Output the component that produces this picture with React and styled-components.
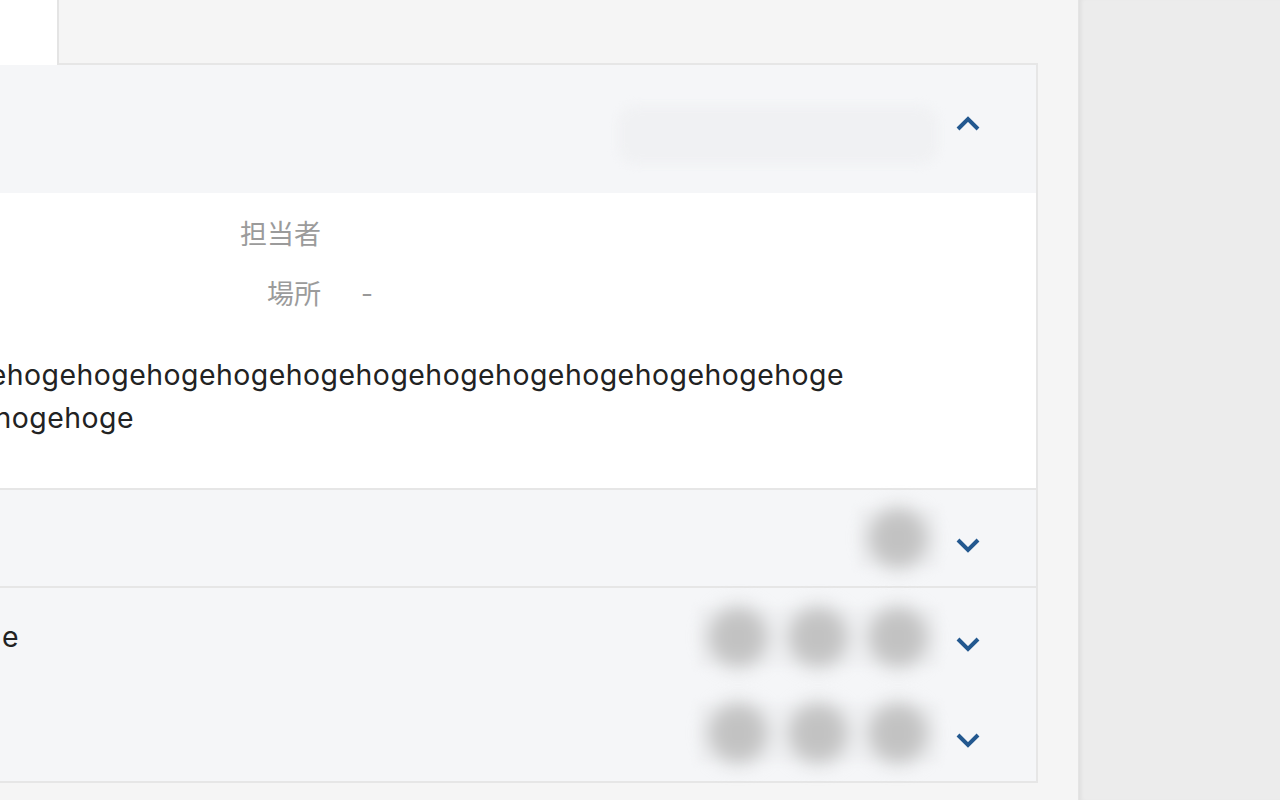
import styled, { createGlobalStyle } from "styled-components";

const GlobalStyle = createGlobalStyle`
  body {
    margin: 0;
    background: #ececec;
    font-family: Inter, "Noto Sans CJK JP", sans-serif;
    overflow: hidden;
  }
`;

// Layout
const Page = styled.div`
  display: flex;
  width: 1280px;
  height: 800px;
  overflow: hidden;
`;

const Main = styled.main`
  width: 1078px;
  flex-shrink: 0;
  background: #f5f5f5;
  overflow: hidden;
`;

const Inner = styled.div`
  margin-left: -400px;
  width: 1478px;
`;

const Side = styled.aside`
  flex: 1;
  background: #ececec;
  box-shadow: inset 4px 0 4px -2px rgba(0, 0, 0, 0.06);
  border-left: 1px solid #e4e4e4;
`;

const Tabs = styled.div`
  display: flex;
  height: 63px;
`;

const Tab = styled.div`
  width: 457px;
  background: ${(p) => (p.active ? "#ffffff" : "transparent")};
  border-right: 2px solid #e4e4e4;
  margin-bottom: ${(p) => (p.active ? "-2px" : "0")};
  position: relative;
  z-index: 1;
`;

const Card = styled.section`
  margin-right: 40px;
  border: 2px solid #e6e6e6;
  border-left: none;
`;

const Header = styled.div`
  height: 128px;
  background: #f5f6f8;
  display: flex;
  align-items: center;
  justify-content: flex-end;
  padding-right: 56px;
`;

const Body = styled.div`
  background: #ffffff;
  padding: 10px 0 49px;
  border-bottom: 2px solid #e6e6e6;
`;

const InfoRow = styled.div`
  display: grid;
  grid-template-columns: 721px 1fr;
  column-gap: 40px;
  height: 60px;
  align-items: center;
`;

const Label = styled.div`
  text-align: right;
  font-family: "Noto Sans CJK JP", sans-serif;
  font-size: 27px;
  color: #9b9b9b;
  margin-top: -2px;
`;

const Value = styled.div`
  font-size: 26px;
  color: #999999;
`;

const Description = styled.div`
  margin-top: 30px;
  display: flex;
  flex-direction: column;
`;

const Line = styled.div`
  width: ${(p) => p.end + 400}px;
  display: flex;
  justify-content: flex-end;
  white-space: nowrap;
  height: 43px;
  align-items: center;
  font-size: 28.4px;
  color: #222222;
  letter-spacing: 0.5px;
`;

const Row = styled.div`
  background: #f5f6f8;
  border-bottom: ${(p) => (p.last ? "none" : "2px solid #e6e6e6")};
`;

const SubRow = styled.div`
  height: ${(p) => p.h || 96}px;
  display: flex;
  align-items: center;
  padding-right: 56px;
`;

const RowTitle = styled.div`
  display: flex;
  justify-content: flex-end;
  flex: 0 0 419px;
  white-space: nowrap;
  font-size: 28.4px;
  color: #222222;
  letter-spacing: 0.5px;
`;

const Spacer = styled.div`
  flex: 1;
`;

const Avatars = styled.div`
  display: flex;
  gap: 20px;
  padding: 0 12px;
  margin-right: 16px;
  height: 60px;
  align-items: center;
  background: #f1f2f4;
  filter: blur(3px);
`;

const Avatar = styled.div`
  width: 60px;
  height: 60px;
  border-radius: 50%;
  background: #c2c2c2;
  filter: blur(9px);
`;

const Blurred = styled.div`
  width: 320px;
  height: 58px;
  margin-right: 18px;
  margin-top: 12px;
  border-radius: 18px;
  background: #f0f1f3;
  filter: blur(5px);
`;

const Chevron = styled.svg`
  width: 24px;
  height: 16px;
  margin-top: ${(p) => p.offset || 0}px;
  flex-shrink: 0;
`;

const ChevronIcon = ({ up, offset }) => (
  <Chevron viewBox="0 0 24 16" offset={offset}>
    <path
      d={up ? "M2 14 L12 4 L22 14" : "M2 3 L12 13 L22 3"}
      fill="none"
      stroke="#23588f"
      strokeWidth="4"
    />
  </Chevron>
);

const AvatarGroup = ({ count }) => (
  <Avatars>
    {Array.from({ length: count }).map((_, i) => (
      <Avatar key={i} />
    ))}
  </Avatars>
);

const App = () => {
  return (
    <Page>
      <GlobalStyle />
      <Main>
        <Inner>
          <Tabs>
            <Tab active />
          </Tabs>
          <Card>
            <Header>
              <Blurred />
              <ChevronIcon up offset={-12} />
            </Header>
            <Body>
              <InfoRow>
                <Label>担当者</Label>
                <Value />
              </InfoRow>
              <InfoRow>
                <Label>場所</Label>
                <Value>-</Value>
              </InfoRow>
              <Description>
                <Line end={844}>
                  hogehogehogehogehogehogehogehogehogehogehogehogehogehogehoge
                </Line>
                <Line end={134}>hogehogehoge</Line>
              </Description>
            </Body>
            <Row>
              <SubRow h={96}>
                <Spacer />
                <AvatarGroup count={1} />
                <ChevronIcon offset={14} />
              </SubRow>
            </Row>
            <Row last>
              <SubRow h={97}>
                <RowTitle>hogehoge</RowTitle>
                <Spacer />
                <AvatarGroup count={3} />
                <ChevronIcon offset={14} />
              </SubRow>
              <SubRow h={96}>
                <Spacer />
                <AvatarGroup count={3} />
                <ChevronIcon offset={14} />
              </SubRow>
            </Row>
          </Card>
        </Inner>
      </Main>
      <Side />
    </Page>
  );
};

export default App;
